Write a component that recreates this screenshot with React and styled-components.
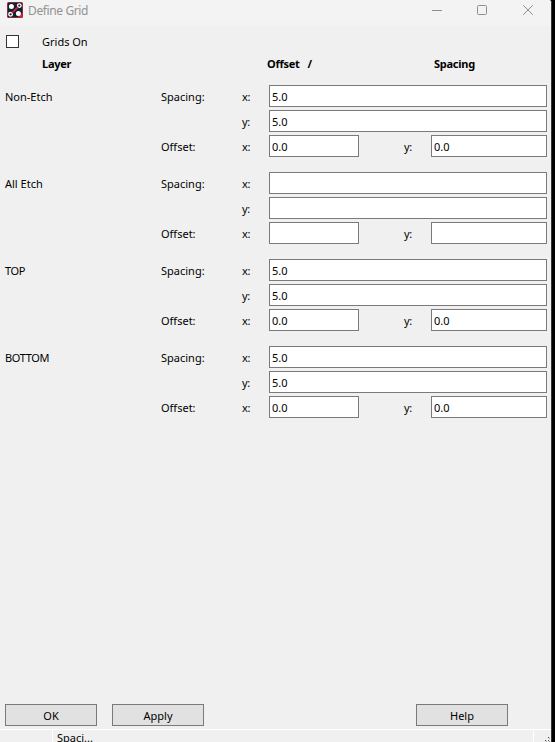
import React, { useState } from "react";
import styled, { createGlobalStyle } from "styled-components";

const layers = [
  { name: "Non-Etch", spacing: "5.0", offset: "0.0" },
  { name: "All Etch", spacing: "", offset: "" },
  { name: "TOP", spacing: "5.0", offset: "0.0", tight: true },
  { name: "BOTTOM", spacing: "5.0", offset: "0.0", tight: true },
];

export default function App() {
  const [gridsOn, setGridsOn] = useState(false);

  return (
    <>
      <GlobalStyle />
      <Window>
        <TitleBar>
          <AppIcon />
          <Title>Define Grid</Title>
          <WindowControls />
        </TitleBar>
        <Content>
          <GridsRow>
            <Checkbox
              type="checkbox"
              checked={gridsOn}
              onChange={(e) => setGridsOn(e.target.checked)}
            />
            <Label>Grids On</Label>
          </GridsRow>
          <HeaderRow>
            <Heading>Layer</Heading>
            <Heading>Offset&nbsp;&nbsp; /</Heading>
            <Heading>Spacing</Heading>
          </HeaderRow>
          <LayerList>
            {layers.map((layer) => (
              <LayerGroup key={layer.name} layer={layer} />
            ))}
          </LayerList>
        </Content>
        <ButtonRow>
          <Button>OK</Button>
          <Button>Apply</Button>
          <Button $last>Help</Button>
        </ButtonRow>
        <StatusBar>
          <StatusCell />
          <StatusCell $message>Spaci...</StatusCell>
          <StatusCell $grip>
            <SizeGrip />
          </StatusCell>
        </StatusBar>
      </Window>
    </>
  );
}

function LayerGroup({ layer }) {
  return (
    <Group>
      <FieldRow>
        <Label $tight={layer.tight}>{layer.name}</Label>
        <Label>Spacing:</Label>
        <Label $tight>x:</Label>
        <Field $wide defaultValue={layer.spacing} />
      </FieldRow>
      <FieldRow>
        <span />
        <span />
        <Label $tight>y:</Label>
        <Field $wide defaultValue={layer.spacing} />
      </FieldRow>
      <FieldRow>
        <span />
        <Label>Offset:</Label>
        <Label $tight>x:</Label>
        <Field defaultValue={layer.offset} />
        <span />
        <Label $tight>y:</Label>
        <Field defaultValue={layer.offset} />
      </FieldRow>
    </Group>
  );
}

function AppIcon() {
  return (
    <svg width="16" height="16" viewBox="0 0 16 16">
      <rect width="16" height="16" rx="1.5" fill="#b52a3b" />
      <rect x="0.8" y="0.8" width="14.4" height="14.4" rx="1" fill="#10222e" />
      <path d="M10.5 15.5h5v-5z" fill="#d9203a" />
      <circle cx="4.4" cy="4.5" r="2.5" fill="#fff" />
      <circle cx="11.4" cy="11.6" r="2.5" fill="#fff" />
      <circle cx="12.3" cy="3.6" r="1.8" fill="#10222e" stroke="#fff" strokeWidth="1.3" />
      <circle cx="3.6" cy="12.3" r="1.8" fill="#10222e" stroke="#fff" strokeWidth="1.3" />
      <path d="M5 11 11 5" stroke="#e8203c" strokeWidth="1.7" />
    </svg>
  );
}

function WindowControls() {
  return (
    <Controls width="103" height="12" viewBox="0 0 103 12" fill="none" stroke="#8e8e8e">
      <path d="M0 6.5h10" />
      <rect x="45.5" y="1.5" width="9" height="9" rx="1" />
      <path d="m91.2 1.2 9.6 9.6m0-9.6-9.6 9.6" />
    </Controls>
  );
}

function SizeGrip() {
  return (
    <svg width="6" height="5" viewBox="0 0 6 5" fill="#444" shapeRendering="crispEdges">
      <path d="M3 0h1v1h-1zM0 3h1v1h-1zM3 3h1v1h-1z" />
      <path d="M4 1h1v1h-1zM1 4h1v1h-1zM4 4h1v1h-1z" fill="#aaa" />
    </svg>
  );
}

const GlobalStyle = createGlobalStyle`
  * {
    box-sizing: border-box;
  }
  body {
    margin: 0;
    background: #000;
    overflow: hidden;
  }
  body, input, button {
    font-family: "Noto Sans", sans-serif;
    font-size: 11px;
    color: #000;
  }
`;

const Window = styled.div`
  width: 552px;
  height: 742px;
  display: flex;
  flex-direction: column;
  background: #f0f0f0;
  border-right: 1px solid #353535;
  border-top-right-radius: 3px;
  overflow: hidden;
`;

const TitleBar = styled.div`
  height: 26px;
  display: flex;
  align-items: flex-start;
  padding: 2px 16px 0 7px;
  background: #f3f3f3;
`;

const Title = styled.span`
  margin-left: 5px;
  font-size: 12px;
  letter-spacing: -0.38px;
  line-height: 18px;
  color: #929292;
`;

const Controls = styled.svg`
  margin: 2px 0 0 auto;
`;

const Content = styled.div`
  flex: 1;
`;

const Label = styled.span`
  line-height: 16px;
  letter-spacing: ${(props) => (props.$tight ? "-0.35px" : "normal")};
  white-space: pre;
`;

const Heading = styled(Label)`
  font-weight: 700;
  line-height: 14px;
  letter-spacing: -0.25px;
`;

const GridsRow = styled.label`
  height: 31px;
  display: flex;
  align-items: center;
  gap: 23px;
  padding-left: 6px;

  ${Label} {
    padding-top: 1px;
  }
`;

const Checkbox = styled.input`
  appearance: none;
  width: 13px;
  height: 13px;
  margin: 0;
  background: #fff;
  border: 1px solid #333;
  &:checked {
    background: #333;
  }
`;

const HeaderRow = styled.div`
  height: 14px;
  display: grid;
  grid-template-columns: 225px 167px auto;
  padding-left: 42px;
`;

const LayerList = styled.div`
  display: flex;
  flex-direction: column;
  gap: 15px;
  padding: 14px 4px 0 5px;
`;

const Group = styled.div`
  display: flex;
  flex-direction: column;
  gap: 3px;
`;

const FieldRow = styled.div`
  height: 22px;
  display: grid;
  grid-template-columns: 156px 81px 27px 90px 45px 27px 116px;
  align-items: center;

  ${Label} {
    padding-top: 2px;
  }
`;

const Field = styled.input`
  grid-column: ${(props) => (props.$wide ? "4 / -1" : "auto")};
  width: 100%;
  height: 22px;
  padding: 0 2px;
  background: #fff;
  border: 1px solid #7a7a7a;
  outline: none;
`;

const ButtonRow = styled.div`
  display: flex;
  gap: 15px;
  padding: 0 43px 3px 5px;
`;

const Button = styled.button`
  width: 92px;
  height: 22px;
  padding: 1px 0 0;
  margin-left: ${(props) => (props.$last ? "auto" : "0")};
  background: #e1e1e1;
  border: 1px solid #7a7a7a;
`;

const StatusBar = styled.div`
  height: 13px;
  display: grid;
  grid-template-columns: 52px 481px 1fr;
  border-top: 1px solid #fff;
`;

const StatusCell = styled.div`
  height: 12px;
  display: flex;
  padding-left: ${(props) => (props.$message ? "4px" : "0")};
  border-left: ${(props) => (props.$message || props.$grip ? "1px solid #fff" : "0")};
  line-height: 15px;
  ${(props) => props.$grip && "align-items: flex-end; justify-content: flex-end;"}
`;
